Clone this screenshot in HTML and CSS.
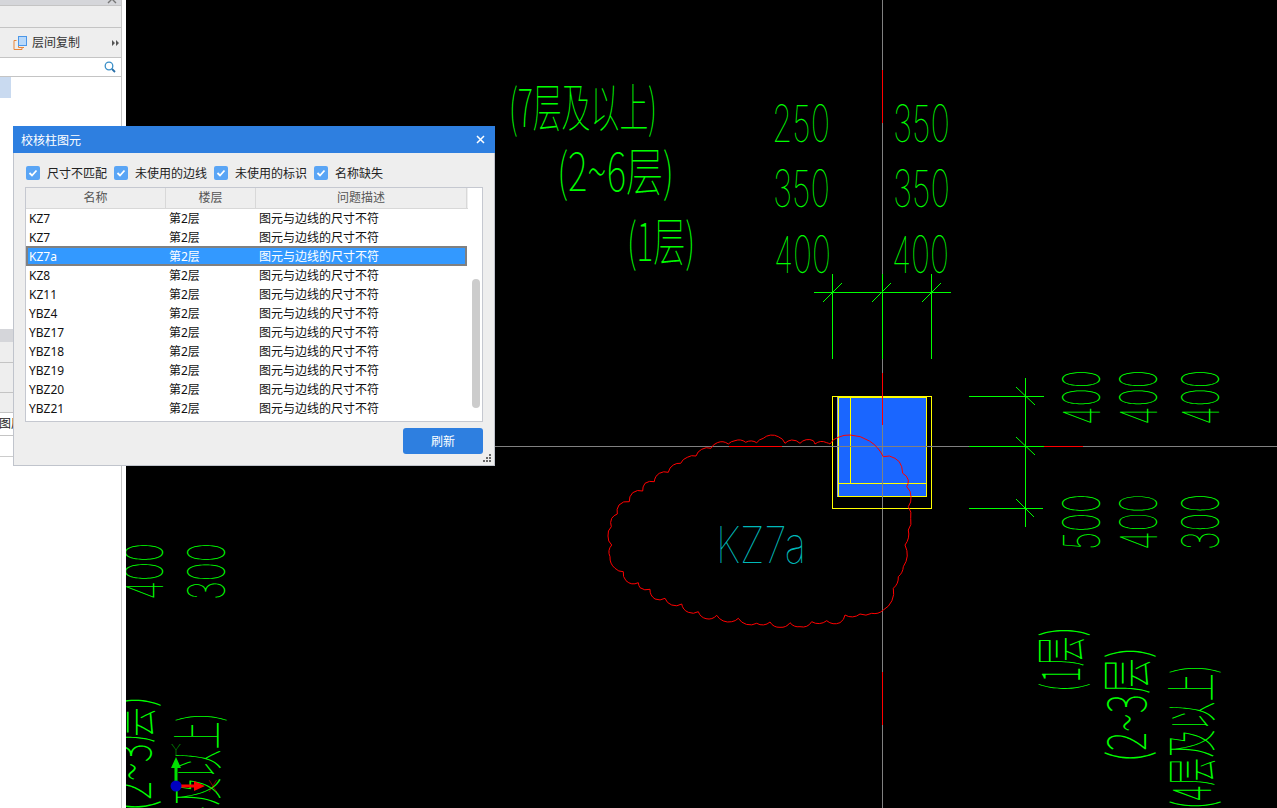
FILE: index.html
```html
<!DOCTYPE html>
<html lang="zh">
<head>
<meta charset="utf-8">
<title>校核柱图元</title>
<link rel="stylesheet" href="styles.css">
</head>
<body>
<div class="app">
  <aside class="side">
    <div class="side-inner">
      <div class="strip"><svg class="strip-chev" width="10" height="5" viewBox="0 0 10 5"><path d="M1 4L5 0L9 4" fill="none" stroke="#777" stroke-width="1.4"/></svg></div>
      <div class="bar-a"></div>
      <div class="toolbar">
        <svg class="copy-icon" width="15" height="16" viewBox="0 0 15 16"><path d="M3.5 5.5H1V14.5H9V12.5M5.5 8V12.5H11" fill="none" stroke="#e8853a" stroke-width="1"/><rect x="5.5" y="1.5" width="8" height="9" fill="#b9d9fa" stroke="#4c97e8"/></svg>
        <span class="tool-label">层间复制</span>
        <svg class="more" width="8" height="6" viewBox="0 0 8 6"><path d="M0 0L3 3L0 6ZM4 0L7 3L4 6Z" fill="#555"/></svg>
      </div>
      <div class="search">
        <svg width="12" height="12" viewBox="0 0 12 12"><circle cx="5" cy="5" r="3.8" fill="none" stroke="#3a8fc8" stroke-width="1.3"/><path d="M8 8L11 11" stroke="#2a6fa8" stroke-width="1.8"/></svg>
      </div>
      <div class="tree"><div class="tree-sel"></div></div>
      <div class="band"></div>
      <div class="gray r1"></div>
      <div class="gray r2"></div>
      <div class="gray r3"></div>
      <div class="prop">图层</div>
      <div class="prop-2"></div>
    </div>
  </aside>

  <main class="canvas">
    <svg class="cad" width="1151" height="808" viewBox="126 0 1151 808">
      <g class="ln-gray">
        <path d="M882.5 0V808M126 446.500H1277"/>
      </g>
      <g class="ln-red">
        <path d="M882.500 70V123M882.500 373V425M882.500 672V725M729 446.500H782M1044 446.500H1083"/>
      </g>

      <rect class="col-fill" x="837.500" y="397.500" width="89" height="99"/>
      <g class="ln-yellow">
        <rect x="832.500" y="396.500" width="99" height="112"/>
        <rect x="838.500" y="397.500" width="88" height="99"/>
        <path d="M850.500 397V483.500H926M838 483.500H851"/>
      </g>
      <path class="ln-gray" d="M882.500 373V508M832 446.500H932"/>
      <path class="ln-red" d="M882.500 373V425"/>

      <path class="cloud" d="M608 536A11 11 0 0 1 611.300 526.700A11 11 0 0 1 611.700 518.300A11 11 0 0 1 617.300 514A11 11 0 0 1 619 505A11 11 0 0 1 629.300 501.700A11 11 0 0 1 632.700 492.700A11 11 0 0 1 642.700 491A11 11 0 0 1 645 483.300A11 11 0 0 1 654.300 481.700A11 11 0 0 1 659.300 473.300A11 11 0 0 1 668.300 472.300A11 11 0 0 1 673.300 465A11 11 0 0 1 680.700 463.300A11 11 0 0 1 687.300 457.300A11 11 0 0 1 696 456A11 11 0 0 1 701.700 449.300A11 11 0 0 1 711 448.300A11 11 0 0 1 717.300 442.700A11 11 0 0 1 728.300 444A11 11 0 0 1 735 440.700A11 11 0 0 1 745.700 442.300A11 11 0 0 1 756.700 442.700A11 11 0 0 1 763.300 438.300A13 13 0 0 1 778.300 436.700A11 11 0 0 1 785 443.300A11 11 0 0 1 791.700 440A11 11 0 0 1 800 443.300A11 11 0 0 1 813.300 440.700A11 11 0 0 1 815 444A11 11 0 0 1 826.700 442.700A11 11 0 0 1 830 444A13 13 0 0 1 838.300 437.300A24 24 0 0 1 850 435A38 38 0 0 1 883.300 456.700A13 13 0 0 1 895 458.300A13 13 0 0 1 901.700 466.700L902.700 473.300A11 11 0 0 1 908.300 480A11 11 0 0 1 906.700 486.700A13 13 0 0 1 911 496.700A14 14 0 0 1 908.300 506.700A14 14 0 0 1 910.700 518.300A14 14 0 0 1 908.300 530A18 18 0 0 1 905 545A22 22 0 0 1 903.300 566.700A14 14 0 0 1 898.300 576.700A14 14 0 0 1 893.300 588.300A20 20 0 0 1 883.300 610A13 13 0 0 1 871.700 613.300A13 13 0 0 1 860 614A13 13 0 0 1 845 615A11 11 0 0 1 840 622.700A13 13 0 0 1 826.700 620.700A13 13 0 0 1 811.700 621.700A11 11 0 0 1 800 626.700A11 11 0 0 1 790 622.700A11 11 0 0 1 780 627.300A11 11 0 0 1 770 622A11 11 0 0 1 756.700 623.300A14 14 0 0 1 738.300 618.300A11 11 0 0 1 731.700 621.700A14 14 0 0 1 716.700 615.300A11 11 0 0 1 706 618.700A11 11 0 0 1 698.300 611.700A11 11 0 0 1 688.300 612.300A11 11 0 0 1 681.700 604A11 11 0 0 1 671.700 605A11 11 0 0 1 665 598.300A11 11 0 0 1 655 599A11 11 0 0 1 650 589.300A11 11 0 0 1 640 587.700A11 11 0 0 1 638.300 582.700A11 11 0 0 1 626 580.700A11 11 0 0 1 623.300 571.700A11 11 0 0 1 615 568.300A14 14 0 0 1 610 556.700A11 11 0 0 1 611.700 545A11 11 0 0 1 608 536Z"/>

      <g class="ln-green">
        <path d="M814 292.500H951M832.500 274V359M882.500 274V359M931.500 274V359M823 302L842 283M872 302L891 283M922 302L941 283"/>
        <path d="M1025.500 378V527M969 396.500H1044M969 446.500H1044M969 508.500H1043M1016 387L1035 405M1016 437L1035 455M1016 499L1034 517"/>
      </g>

      <g class="cad-t">
        <text x="772" y="142" textLength="58" lengthAdjust="spacingAndGlyphs">250</text>
        <text x="893" y="142" textLength="57" lengthAdjust="spacingAndGlyphs">350</text>
        <text x="773" y="207" textLength="57" lengthAdjust="spacingAndGlyphs">350</text>
        <text x="893" y="207" textLength="57" lengthAdjust="spacingAndGlyphs">350</text>
        <text x="774" y="273" textLength="57" lengthAdjust="spacingAndGlyphs">400</text>
        <text x="892" y="273" textLength="57" lengthAdjust="spacingAndGlyphs">400</text>
        <text transform="translate(1100 425) rotate(-90)" textLength="55" lengthAdjust="spacingAndGlyphs">400</text>
        <text transform="translate(1157 425) rotate(-90)" textLength="55" lengthAdjust="spacingAndGlyphs">400</text>
        <text transform="translate(1219 425) rotate(-90)" textLength="55" lengthAdjust="spacingAndGlyphs">400</text>
        <text transform="translate(1100 550) rotate(-90)" textLength="56" lengthAdjust="spacingAndGlyphs">500</text>
        <text transform="translate(1157 550) rotate(-90)" textLength="56" lengthAdjust="spacingAndGlyphs">400</text>
        <text transform="translate(1219 550) rotate(-90)" textLength="56" lengthAdjust="spacingAndGlyphs">300</text>
        <text transform="translate(163 600) rotate(-90)" textLength="57" lengthAdjust="spacingAndGlyphs">400</text>
        <text transform="translate(225 600) rotate(-90)" textLength="57" lengthAdjust="spacingAndGlyphs">300</text>
      </g>
      <g class="cad-c">
        <text x="509" y="127" textLength="148" lengthAdjust="spacingAndGlyphs">(7层及以上)</text>
        <text x="557" y="191" textLength="117" lengthAdjust="spacingAndGlyphs">(2~6层)</text>
        <text x="627" y="261" textLength="68" lengthAdjust="spacingAndGlyphs">(1层)</text>
        <text transform="translate(1080 692) rotate(-90)" textLength="65" lengthAdjust="spacingAndGlyphs">(1层)</text>
        <text transform="translate(1146 762) rotate(-90)" textLength="115" lengthAdjust="spacingAndGlyphs">(2~3层)</text>
        <text transform="translate(1211 809) rotate(-90)" textLength="144" lengthAdjust="spacingAndGlyphs">(4层及以上)</text>
        <text transform="translate(151 811) rotate(-90)" textLength="115" lengthAdjust="spacingAndGlyphs">(2~3层)</text>
        <text transform="translate(217 857) rotate(-90)" textLength="144" lengthAdjust="spacingAndGlyphs">(4层及以上)</text>
      </g>
      <text class="cad-k" x="716" y="563" textLength="90" lengthAdjust="spacingAndGlyphs">KZ7a</text>

      <g>
        <path class="axis-y" d="M174.500 786V768H171L176 757L181 768H177.500V786Z"/>
        <path class="axis-x" d="M176 784.500H194V781L205 786L194 791V787.500H176Z"/>
        <circle class="axis-o" cx="176" cy="786" r="5.500"/>
        <text class="axis-ly" x="171" y="755" textLength="10" lengthAdjust="spacingAndGlyphs">Y</text>
        <text class="axis-lx" x="208" y="792" textLength="9" lengthAdjust="spacingAndGlyphs">X</text>
      </g>
    </svg>
  </main>

  <section class="dialog">
    <header class="d-title">
      <span>校核柱图元</span>
      <svg width="9" height="9" viewBox="0 0 9 9"><path d="M1 1L8 8M8 1L1 8" stroke="#fff" stroke-width="1.500"/></svg>
    </header>
    <div class="checks">
      <label class="chk"><span class="box"><svg width="10" height="8" viewBox="0 0 10 8"><path d="M1.500 4L4 6.500L8.500 1.500" fill="none" stroke="#fff" stroke-width="1.800"/></svg></span>尺寸不匹配</label>
      <label class="chk"><span class="box"><svg width="10" height="8" viewBox="0 0 10 8"><path d="M1.500 4L4 6.500L8.500 1.500" fill="none" stroke="#fff" stroke-width="1.800"/></svg></span>未使用的边线</label>
      <label class="chk"><span class="box"><svg width="10" height="8" viewBox="0 0 10 8"><path d="M1.500 4L4 6.500L8.500 1.500" fill="none" stroke="#fff" stroke-width="1.800"/></svg></span>未使用的标识</label>
      <label class="chk"><span class="box"><svg width="10" height="8" viewBox="0 0 10 8"><path d="M1.500 4L4 6.500L8.500 1.500" fill="none" stroke="#fff" stroke-width="1.800"/></svg></span>名称缺失</label>
    </div>
    <div class="table">
      <div class="t-main">
        <div class="t-head">
          <div class="th th1">名称</div><div class="th th2">楼层</div><div class="th th3">问题描述</div>
        </div>
        <div class="row"><span class="c1">KZ7</span><span class="c2">第2层</span><span>图元与边线的尺寸不符</span></div>
        <div class="row"><span class="c1">KZ7</span><span class="c2">第2层</span><span>图元与边线的尺寸不符</span></div>
        <div class="row sel"><span class="c1">KZ7a</span><span class="c2">第2层</span><span>图元与边线的尺寸不符</span></div>
        <div class="row"><span class="c1">KZ8</span><span class="c2">第2层</span><span>图元与边线的尺寸不符</span></div>
        <div class="row"><span class="c1">KZ11</span><span class="c2">第2层</span><span>图元与边线的尺寸不符</span></div>
        <div class="row"><span class="c1">YBZ4</span><span class="c2">第2层</span><span>图元与边线的尺寸不符</span></div>
        <div class="row"><span class="c1">YBZ17</span><span class="c2">第2层</span><span>图元与边线的尺寸不符</span></div>
        <div class="row"><span class="c1">YBZ18</span><span class="c2">第2层</span><span>图元与边线的尺寸不符</span></div>
        <div class="row"><span class="c1">YBZ19</span><span class="c2">第2层</span><span>图元与边线的尺寸不符</span></div>
        <div class="row"><span class="c1">YBZ20</span><span class="c2">第2层</span><span>图元与边线的尺寸不符</span></div>
        <div class="row"><span class="c1">YBZ21</span><span class="c2">第2层</span><span>图元与边线的尺寸不符</span></div>
      </div>
      <div class="t-track"><div class="t-thumb"></div></div>
    </div>
    <div class="d-foot">
      <button class="btn" type="button">刷新</button>
      <svg class="grip" width="8" height="8" viewBox="0 0 8 8"><path d="M6 0H8V2H6ZM3 3H5V5H3ZM6 3H8V5H6ZM0 6H2V8H0ZM3 6H5V8H3ZM6 6H8V8H6Z" fill="#666"/></svg>
    </div>
  </section>
</div>
</body>
</html>
```
FILE: styles.css
```css
* { box-sizing: border-box; }
html, body { margin: 0; padding: 0; height: 100%; overflow: hidden; background: #000; }
body { font: 12px "Noto Sans", "Noto Sans CJK SC", sans-serif; color: #222; }
.app { position: relative; display: flex; width: 1277px; height: 808px; }

/* left panel */
.side { width: 126px; flex: none; background: #fff; }
.side-inner { width: 122px; height: 808px; border-right: 1px solid #c6c6c6; background: #fff; display: flex; flex-direction: column; overflow: hidden; }
.strip { height: 6px; background: #d5d6da; border-bottom: 1px solid #c4c4c4; display: flex; justify-content: flex-end; padding-right: 4px; align-items: flex-start; }
.strip-chev { margin-top: -1px; }
.bar-a { height: 22px; background: #eee; border-bottom: 1px solid #c4c4c4; }
.toolbar { height: 30px; background: #eee; border-bottom: 1px solid #c4c4c4; display: flex; align-items: center; padding-left: 13px; }
.copy-icon { flex: none; }
.tool-label { margin: -2px 0 0 4px; font-size: 12px; color: #333; white-space: nowrap; }
.more { margin-left: auto; margin-right: 1px; }
.search { height: 19px; background: #fff; border-bottom: 1px solid #c4c4c4; display: flex; align-items: center; justify-content: flex-end; padding-right: 5px; }
.tree { height: 252px; background: #fff; }
.tree-sel { width: 11px; height: 21px; background: #c9daf0; }
.band { height: 13px; background: #d5d6da; flex: none; }
.gray { background: #eee; border-bottom: 1px solid #c4c4c4; flex: none; }
.r1 { height: 21px; }
.r2 { height: 30px; }
.r3 { height: 20px; }
.prop { height: 23px; line-height: 22px; border-bottom: 1px solid #c4c4c4; flex: none; margin-left: -1px; color: #222; }
.prop-2 { height: 21px; border-bottom: 1px solid #ccc; flex: none; }

/* cad canvas */
.canvas { flex: 1; background: #000; overflow: hidden; }
.cad { display: block; }
.ln-gray { fill: none; stroke: #808080; stroke-width: 1; }
.ln-red { fill: none; stroke: #ff0000; stroke-width: 1; }
.ln-green { fill: none; stroke: #00ff00; stroke-width: 1; }
.ln-yellow { fill: none; stroke: #ffff00; stroke-width: 1; }
.col-fill { fill: #1a66ff; stroke: #8aa4dc; stroke-width: 1; }
.cloud { fill: none; stroke: #ff0000; stroke-width: 1; }
.cad-t { font-family: Inter, Lato, sans-serif; font-weight: 100; font-size: 51px; fill: #00ff00; }
.cad-c { font-family: "Noto Sans CJK SC", sans-serif; font-weight: 100; font-size: 52px; fill: #00ff00; }
.cad-k { font-family: Inter, Lato, sans-serif; font-weight: 100; font-size: 50px; fill: #00b8b8; }
.axis-y { fill: #00e000; }
.axis-x { fill: #ff0000; }
.axis-o { fill: #0000c0; }
.axis-ly { font: 100 15px Inter, sans-serif; fill: #00ff00; }
.axis-lx { font: 100 16px Inter, sans-serif; fill: #ff0000; }

/* dialog */
.dialog { position: absolute; left: 13px; top: 126px; width: 482px; height: 340px; background: #eee; border: 1px solid #c0c4cc; border-top: 0; display: flex; flex-direction: column; }
.d-title { height: 27px; margin: 0 -1px; flex: none; background: #2e7fe0; color: #fff; display: flex; align-items: center; justify-content: space-between; padding: 0 10px 0 8px; font-size: 12px; }
.checks { display: flex; gap: 7px; padding: 12px 0 0 12px; height: 34px; flex: none; }
.chk { display: flex; align-items: center; height: 15px; white-space: nowrap; color: #222; }
.box { width: 14px; height: 14px; border-radius: 2px; background: #5aa5f5; margin-right: 7px; display: flex; align-items: center; justify-content: center; }
.table { margin-left: 11px; width: 458px; height: 235px; flex: none; background: #fff; border: 1px solid #c5c8d0; display: flex; }
.t-main { width: 441px; flex: none; }
.t-head { display: flex; height: 21px; background: #eee; border-bottom: 1px solid #d8d8d8; color: #555; width: 442px; }
.th { text-align: center; line-height: 20px; border-right: 1px solid #d8d8d8; }
.th1 { width: 140px; }
.th2 { width: 90px; }
.th3 { width: 211px; }
.row { display: flex; height: 19px; line-height: 19px; padding-left: 3px; color: #111; white-space: nowrap; }
.c1 { width: 140px; }
.c2 { width: 90px; }
.row.sel { background: #3399ff; color: #fff; height: 20px; margin-top: -1px; padding-top: 1px; box-shadow: inset 0 0 0 2px #808080; }
.t-track { flex: 1; padding: 91px 2px 0 5px; }
.t-thumb { width: 8px; height: 129px; background: #ccc; border-radius: 4px; }
.d-foot { flex: 1; position: relative; display: flex; justify-content: flex-end; padding: 6px 11px 0 0; }
.btn { width: 80px; height: 26px; border: 0; border-radius: 3px; background: #2e7fe0; color: #fff; font: inherit; padding: 0; }
.grip { position: absolute; right: 3px; bottom: 3px; }
```
